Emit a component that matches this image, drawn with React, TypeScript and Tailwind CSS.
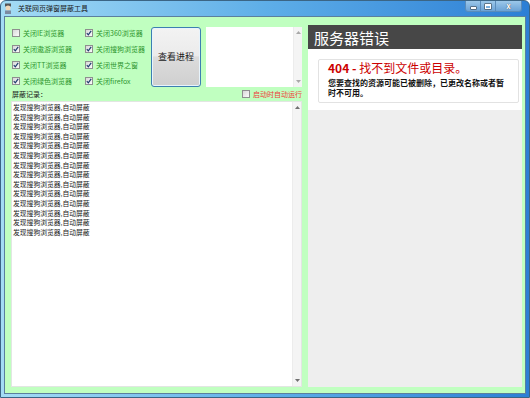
import React from "react";

interface Option {
  label: string;
  checked: boolean;
}

const options: Option[] = [
  { label: "关闭IE浏览器", checked: false },
  { label: "关闭360浏览器", checked: true },
  { label: "关闭遨游浏览器", checked: true },
  { label: "关闭搜狗浏览器", checked: true },
  { label: "关闭TT浏览器", checked: true },
  { label: "关闭世界之窗", checked: true },
  { label: "关闭绿色浏览器", checked: true },
  { label: "关闭firefox", checked: true },
];

const logLines = Array.from({ length: 14 }, () => "发现搜狗浏览器,自动屏蔽");

const CheckBox = ({ checked }: { checked: boolean }) => (
  <span className="w-[8px] h-[8px] shrink-0 border border-[#8e8f8f] bg-gradient-to-br from-[#d8d8d8] to-[#fbfbfb] flex items-center justify-center">
    {checked && (
      <svg width="6" height="6" viewBox="0 0 6 6">
        <path d="M0.8 3.2 L2.3 4.8 L5.2 0.8" fill="none" stroke="#1f3c6e" strokeWidth="1.2" />
      </svg>
    )}
  </span>
);

const ScrollBar = ({ faint }: { faint?: boolean }) => (
  <div className="w-[9px] h-full flex flex-col justify-between items-center py-[4px] bg-[#f4f4f4] border-l border-[#ececec]">
    <svg width="5" height="3" viewBox="0 0 5 3">
      <path d="M0 3 L2.5 0 L5 3 Z" fill={faint ? "#a8a8a8" : "#707070"} />
    </svg>
    <svg width="5" height="3" viewBox="0 0 5 3">
      <path d="M0 0 L2.5 3 L5 0 Z" fill={faint ? "#a8a8a8" : "#707070"} />
    </svg>
  </div>
);

const App = () => {
  return (
    <div className="w-[530px] h-[398px] overflow-hidden bg-white font-['Noto_Sans_CJK_SC',sans-serif]">
      <div className="w-full h-full flex flex-col rounded-t-[6px] border border-[#3b6585] bg-gradient-to-r from-[#a4dcf5] via-[#5eaee8] to-[#2c7fd5]">
        {/* title bar */}
        <div className="h-[15px] flex items-start shrink-0">
          <div className="flex items-center h-[14px] pl-[2px]">
            <svg width="10" height="11" viewBox="0 0 10 11">
              <rect x="2" y="0.5" width="6" height="3" fill="#555" />
              <circle cx="5" cy="5" r="2.5" fill="#f1d7b8" />
              <rect x="2" y="7.5" width="6" height="3.5" fill="#7c8aa0" />
            </svg>
            <span className="ml-[5px] text-[7px] leading-none text-[#1b1b1b]">关联网页弹窗屏蔽工具</span>
          </div>
          <div className="ml-auto mr-[7px] flex h-[11px] rounded-b-[3px] border border-t-0 border-[#5a8cba] overflow-hidden">
            <div className="w-[15px] h-full flex items-center justify-center bg-gradient-to-b from-[#9cc8ea] to-[#6aa2d6] border-r border-[#5a8cba]">
              <span className="w-[5px] h-[2px] bg-white mt-[3px] shadow-[0_0_0_0.5px_#333]" />
            </div>
            <div className="w-[15px] h-full flex items-center justify-center bg-gradient-to-b from-[#9cc8ea] to-[#6aa2d6] border-r border-[#5a8cba]">
              <span className="w-[6px] h-[5px] border border-white border-t-2 shadow-[0_0_0_0.5px_#333]" />
            </div>
            <div className="w-[25px] h-full flex items-center justify-center bg-gradient-to-b from-[#9cc8ea] to-[#6aa2d6]">
              <span className="text-[8px] leading-none font-bold text-white [text-shadow:0_0_1px_#222]">x</span>
            </div>
          </div>
        </div>

        {/* client area */}
        <div className="flex-1 mx-[3px] mb-[3px] border border-[#5b7f9e] bg-[#c0ffc0] flex pt-[8px] pl-[6px] pr-[3px] pb-[6px] min-h-0">
          {/* left column */}
          <div className="w-[291px] flex flex-col">
            <div className="h-[62px] flex shrink-0">
              <div className="grid grid-cols-[73px_66px] auto-rows-[16px] pl-[1px]">
                {options.map((o) => (
                  <div key={o.label} className="flex items-center gap-[3px]">
                    <CheckBox checked={o.checked} />
                    <span className="text-[7px] leading-none text-[#2e962e] whitespace-nowrap">{o.label}</span>
                  </div>
                ))}
              </div>
              <button className="mt-[2px] w-[50px] h-[60px] rounded-[3px] border border-[#3c7fb1] bg-[linear-gradient(to_bottom,#f3f3f3_0%,#ebebeb_48%,#dcdcdc_50%,#cfcfcf_100%)] shadow-[inset_0_0_0_1px_#e8f4fc] text-[9px] text-[#1a1a1a]">
                查看进程
              </button>
              <div className="mt-[2px] ml-[5px] w-[96px] h-[60px] bg-white flex">
                <div className="flex-1" />
                <ScrollBar faint />
              </div>
            </div>
            <div className="h-[14px] flex items-center pl-[1px] shrink-0">
              <span className="text-[7px] leading-none text-[#1a1a1a]">屏蔽记录：</span>
              <div className="ml-auto flex items-center gap-[3px]">
                <CheckBox checked={false} />
                <span className="text-[7px] leading-none text-[#f03a3a]">启动时自动运行</span>
              </div>
            </div>
            <div className="flex-1 bg-white flex min-h-0 border border-[#e2e6e2]">
              <div className="flex-1 pl-[1px] pt-[1px]">
                {logLines.map((l, i) => (
                  <div key={i} className="text-[6.8px] leading-[9.6px] text-[#1a1a1a] whitespace-nowrap">{l}</div>
                ))}
              </div>
              <ScrollBar />
            </div>
          </div>

          {/* right panel */}
          <div className="ml-[6px] flex-1 bg-[#eeeeee] flex flex-col">
            <div className="h-[24px] bg-[#474747] flex items-center pl-[6px] shrink-0">
              <span className="text-[15px] leading-none text-white">服务器错误</span>
            </div>
            <div className="bg-white pt-[10px] pl-[10px] pr-[3px] pb-[7px]">
              <div className="border border-[#e2e2e2] rounded-[2px] pl-[9px] pr-[4px] pt-[1px] pb-[4px]">
                <div className="text-[12px] leading-[14px] font-bold text-[#cc0000]">
                  404 - <span className="font-normal">找不到文件或目录。</span>
                </div>
                <div className="mt-[3px] text-[8px] leading-[10px] font-bold text-[#111] whitespace-nowrap">
                  <div>您要查找的资源可能已被删除，已更改名称或者暂</div>
                  <div>时不可用。</div>
                </div>
              </div>
            </div>
          </div>
        </div>
      </div>
    </div>
  );
};

export default App;
